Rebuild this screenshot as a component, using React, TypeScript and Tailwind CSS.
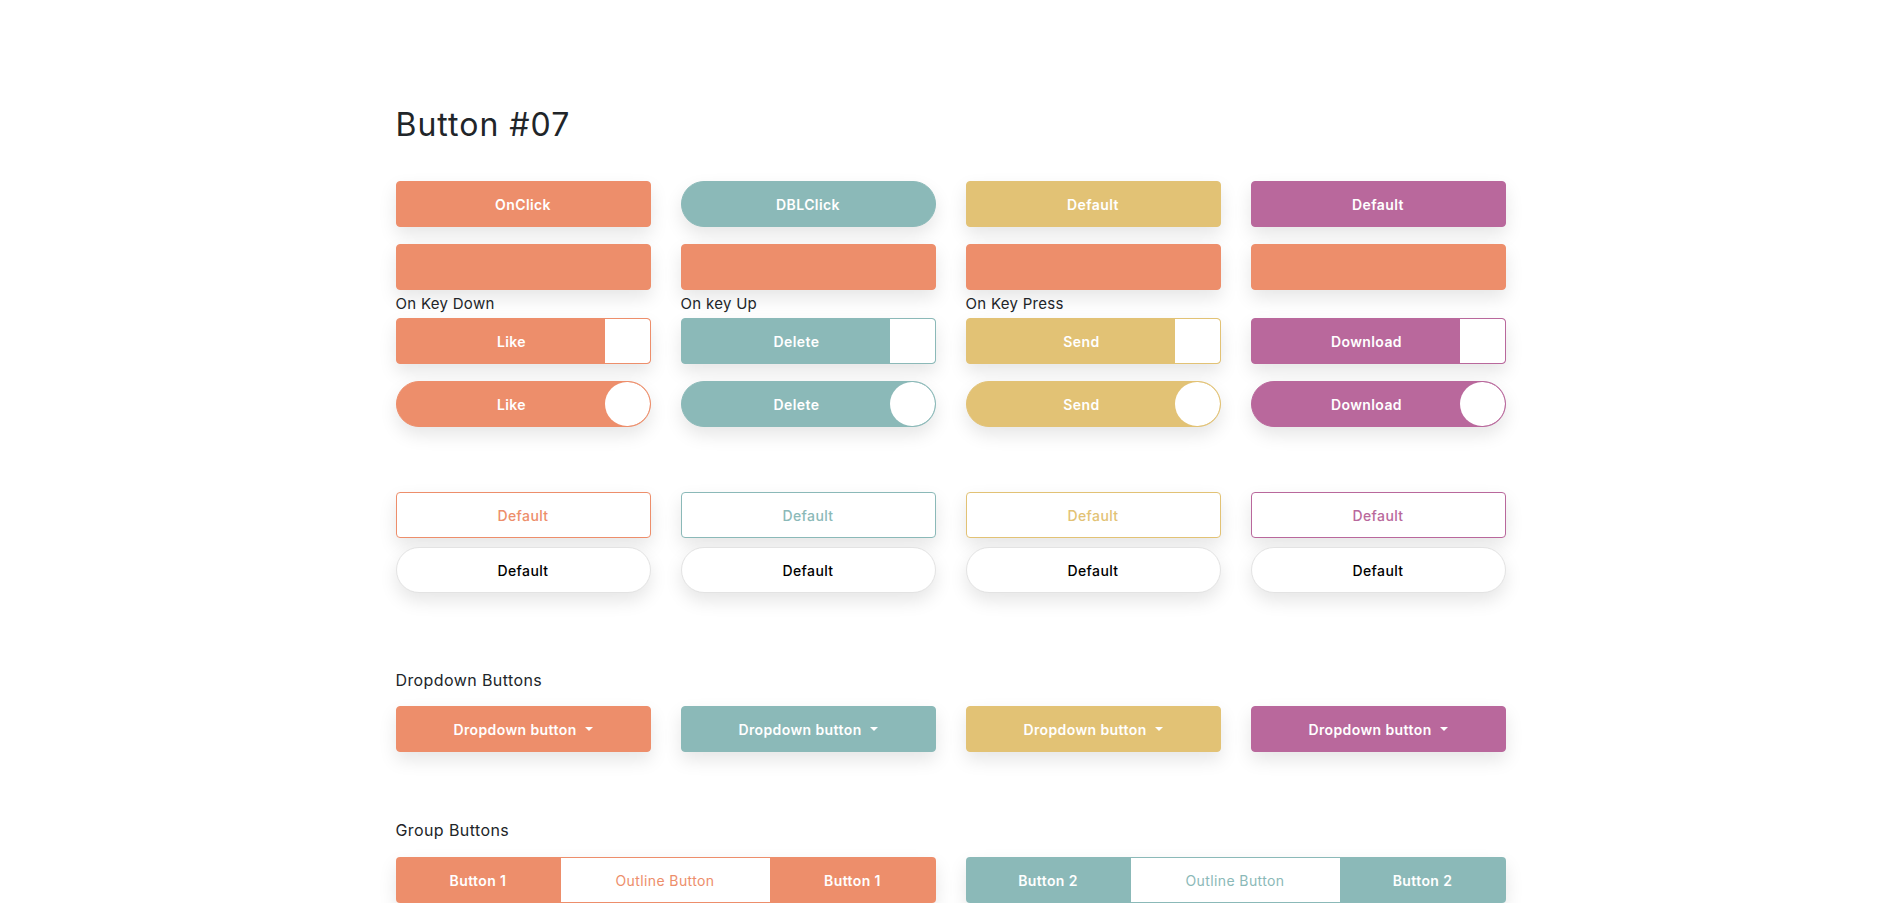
import type { ReactNode } from 'react'

type Tone = 'orange' | 'teal' | 'yellow' | 'purple'

const FILL: Record<Tone, string> = {
  orange: 'bg-[#ed8e6b] border-[#ed8e6b]',
  teal: 'bg-[#8bb9b8] border-[#8bb9b8]',
  yellow: 'bg-[#e2c275] border-[#e2c275]',
  purple: 'bg-[#b9689c] border-[#b9689c]',
}

const OUTLINE: Record<Tone, string> = {
  orange: 'border-[#ed8e6b] text-[#ed8e6b]',
  teal: 'border-[#8bb9b8] text-[#8bb9b8]',
  yellow: 'border-[#e2c275] text-[#e2c275]',
  purple: 'border-[#b9689c] text-[#b9689c]',
}

const shadow = 'shadow-[0_8px_18px_rgba(0,0,0,0.10)]'
const base = `h-[46px] w-full flex items-center justify-center text-[14px] tracking-[0.4px] ${shadow}`

function Solid({ tone, pill, children }: { tone: Tone; pill?: boolean; children?: ReactNode }) {
  return (
    <button className={`${base} ${FILL[tone]} border text-white font-semibold ${pill ? 'rounded-full' : 'rounded-[4px]'}`}>
      {children}
    </button>
  )
}

function Toggle({ tone, pill, label }: { tone: Tone; pill?: boolean; label: string }) {
  return (
    <button
      className={`relative ${base} ${FILL[tone]} border text-white font-semibold overflow-hidden ${pill ? 'rounded-full' : 'rounded-[4px]'}`}
    >
      <span className="pr-[23px]">{label}</span>
      <span
        className={`absolute right-0 top-0 bottom-0 w-[45px] bg-white ${pill ? 'rounded-full' : 'rounded-r-[3px]'}`}
      />
    </button>
  )
}

function Outline({ tone }: { tone: Tone }) {
  return (
    <button className={`${base} bg-white border rounded-[4px] font-medium ${OUTLINE[tone]}`}>Default</button>
  )
}

function WhitePill() {
  return (
    <button className={`${base} bg-white border border-[#e3e3e3] rounded-full font-medium text-black`}>Default</button>
  )
}

function Dropdown({ tone }: { tone: Tone }) {
  return (
    <button className={`${base} ${FILL[tone]} border rounded-[4px] text-white font-semibold gap-[8px]`}>
      Dropdown button
      <span className="w-0 h-0 border-t-[4px] border-x-[4px] border-t-white border-x-transparent" />
    </button>
  )
}

function Group({ tone, label }: { tone: Tone; label: string }) {
  return (
    <div className={`flex h-[46px] rounded-[4px] overflow-hidden text-[14px] tracking-[0.4px] ${shadow}`}>
      <button className={`w-[165px] ${FILL[tone]} text-white font-semibold`}>{label}</button>
      <button className={`flex-1 bg-white border-y ${OUTLINE[tone]}`}>Outline Button</button>
      <button className={`w-[166px] ${FILL[tone]} text-white font-semibold`}>{label}</button>
    </div>
  )
}

const TONES: Tone[] = ['orange', 'teal', 'yellow', 'purple']
const TOGGLES: { tone: Tone; label: string; caption: string }[] = [
  { tone: 'orange', label: 'Like', caption: 'On Key Down' },
  { tone: 'teal', label: 'Delete', caption: 'On key Up' },
  { tone: 'yellow', label: 'Send', caption: 'On Key Press' },
  { tone: 'purple', label: 'Download', caption: '' },
]

export default function App() {
  return (
    <div className="min-h-screen bg-white text-[#212529] font-['Inter','Liberation_Sans',sans-serif]">
      <div className="w-[1110px] mx-auto pt-[106px] pl-[2px] box-content pr-0">
        <h2 className="text-[32px] leading-[38px] font-normal tracking-[1px]">Button #07</h2>

        <div className="grid grid-cols-4 gap-x-[30px] mt-[37px]">
          <Solid tone="orange">OnClick</Solid>
          <Solid tone="teal" pill>DBLClick</Solid>
          <Solid tone="yellow">Default</Solid>
          <Solid tone="purple">Default</Solid>
        </div>

        <div className="grid grid-cols-4 gap-x-[30px] mt-[17px]">
          {TOGGLES.map((t) => (
            <div key={t.tone}>
              <Solid tone="orange" />
              <p className="h-[28px] leading-[28px] text-[15px] tracking-[0.3px]">{t.caption}</p>
              <Toggle tone={t.tone} label={t.label} />
              <div className="mt-[17px]">
                <Toggle tone={t.tone} label={t.label} pill />
              </div>
            </div>
          ))}
        </div>

        <div className="grid grid-cols-4 gap-x-[30px] gap-y-[9px] mt-[65px]">
          {TONES.map((t) => (
            <Outline key={t} tone={t} />
          ))}
          {TONES.map((t) => (
            <WhitePill key={t} />
          ))}
        </div>

        <p className="mt-[75px] text-[16px] leading-[24px] tracking-[0.4px]">Dropdown Buttons</p>
        <div className="grid grid-cols-4 gap-x-[30px] mt-[14px]">
          {TONES.map((t) => (
            <Dropdown key={t} tone={t} />
          ))}
        </div>

        <p className="mt-[66px] text-[16px] leading-[24px] tracking-[0.4px]">Group Buttons</p>
        <div className="grid grid-cols-2 gap-x-[30px] mt-[15px] pb-[40px]">
          <Group tone="orange" label="Button 1" />
          <Group tone="teal" label="Button 2" />
        </div>
      </div>
    </div>
  )
}
